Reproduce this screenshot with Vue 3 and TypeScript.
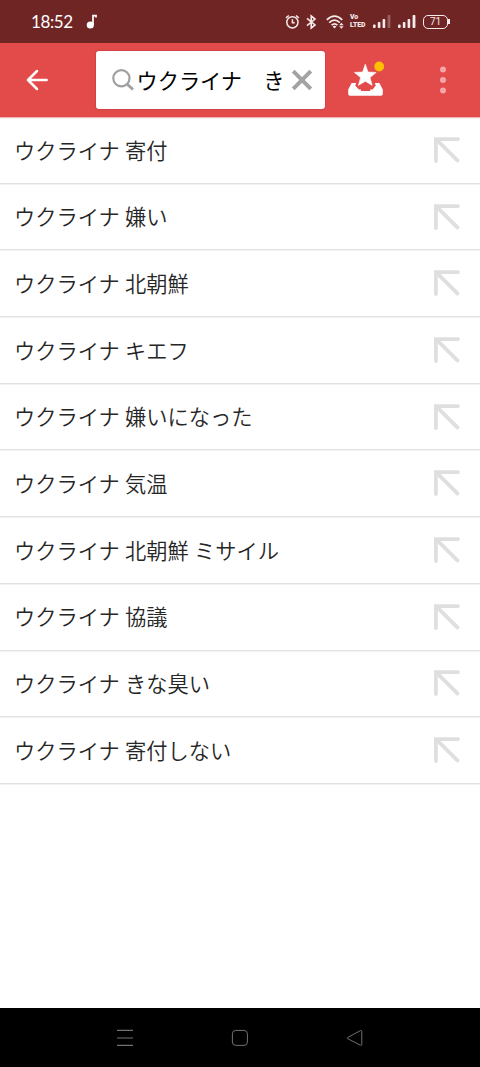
<script setup lang="ts">
const suggestions: string[] = [
  'ウクライナ 寄付',
  'ウクライナ 嫌い',
  'ウクライナ 北朝鮮',
  'ウクライナ キエフ',
  'ウクライナ 嫌いになった',
  'ウクライナ 気温',
  'ウクライナ 北朝鮮 ミサイル',
  'ウクライナ 協議',
  'ウクライナ きな臭い',
  'ウクライナ 寄付しない',
]
const query = 'ウクライナ　き'
</script>

<template>
  <div class="screen">
    <header class="status">
      <span class="clock">18:52</span>
      <svg class="note" width="12" height="16" viewBox="0 0 12 16">
        <circle cx="4.3" cy="11" r="3.6" fill="#fff" />
        <path d="M7 11V1.6H10V3.6" fill="none" stroke="#fff" stroke-width="1.7" />
      </svg>
      <div class="indicators">
        <svg class="alarm" width="15" height="16" viewBox="0 0 15 16" fill="none" stroke="#f5eaea" stroke-width="1.5">
          <circle cx="7.4" cy="8.3" r="5.6" />
          <path d="M7.4 5.3V8.8H9.7M1 3.8L3.8 1.5M11 1.5L13.8 3.8" />
        </svg>
        <svg class="bluetooth" width="11" height="16" viewBox="0 0 11 16" fill="none" stroke="#f5eaea" stroke-width="1.6">
          <path d="M1 4.4L9 11L5.2 14V2L9 5L1 11.6" />
        </svg>
        <svg class="wifi" width="19" height="16" viewBox="0 0 19 16" fill="none" stroke="#f5eaea" stroke-width="1.8">
          <path d="M.8 5.8Q8.5-1.6 16.2 5.8M3.2 8.6Q8.5 3.6 13.8 8.6M5.6 11.2Q8.5 8.5 11.4 11.2" />
          <path d="M6.6 12.4Q8.5 11.2 10.4 12.4L8.5 14.5Z" fill="#f5eaea" stroke="none" />
          <path d="M13.2 11.2L15.4 8.7L17.6 11.2ZM13.2 12.3H17.6L15.4 14.7Z" fill="#f5eaea" stroke="none" />
        </svg>
        <span class="volte"><b>Vo</b><b>LTED</b></span>
        <svg class="signal" width="18" height="14" viewBox="0 0 18 14" fill="#f5eaea">
          <rect x="0" y="9.5" width="2.6" height="3.5" rx=".8" />
          <rect x="4.8" y="7" width="2.6" height="6" rx=".8" />
          <rect x="9.6" y="4" width="2.6" height="9" rx=".8" />
          <rect x="14.6" y="0" width="2.8" height="13" rx=".8" opacity=".3" />
        </svg>
        <svg class="signal second" width="18" height="14" viewBox="0 0 18 14" fill="#f5eaea">
          <rect x="0" y="9.5" width="2.6" height="3.5" rx=".8" />
          <rect x="4.8" y="7" width="2.6" height="6" rx=".8" />
          <rect x="9.6" y="4" width="2.6" height="9" rx=".8" />
          <rect x="14.6" y="0" width="2.8" height="13" rx=".8" />
        </svg>
        <span class="battery">71</span><i class="cap"></i>
      </div>
    </header>

    <div class="toolbar">
      <svg class="back" width="24" height="22" viewBox="0 0 24 22" fill="none" stroke="#fff" stroke-width="2.5" stroke-linecap="round" stroke-linejoin="round">
        <path d="M22.7 11H4.2M13 2L4 11L13 20" />
      </svg>
      <div class="search">
        <svg class="lens" width="24" height="24" viewBox="0 0 24 24" fill="none" stroke="#a0a0a0">
          <circle cx="10.4" cy="10.2" r="8.1" stroke-width="2.2" />
          <path d="M16.2 16.2L22 21.6" stroke-width="2.8" />
        </svg>
        <span class="query">{{ query }}</span>
        <svg class="clear" width="22" height="22" viewBox="0 0 22 22" fill="none" stroke="#a3a3a3" stroke-width="4">
          <path d="M2.2 2.2L19.8 19.8M19.8 2.2L2.2 19.8" />
        </svg>
      </div>
      <svg class="favorites" width="38" height="38" viewBox="0 0 38 38">
        <path d="M3.6 22H8.2L7.2 24.5L10.8 28.6H13V30H22.2V28.6H24.6L27.8 24.5L26.8 22H31.4L34.8 28.4V33Q34.8 34.8 33 34.8H2Q.2 34.8 .2 33V28.4Z" fill="#fff" />
        <path d="M17.3 3.2L20 11.1L28.2 11.4L22 16.5L24.2 24.4L17.3 20.2L10.4 24.4L12.6 16.5L6.4 11.4L14.6 11.1Z" fill="#fff" stroke="#fff" stroke-width=".6" stroke-linejoin="round" />
        <circle cx="31.2" cy="5.5" r="4.9" fill="#ffbf00" />
      </svg>
      <svg class="more" width="8" height="28" viewBox="0 0 8 28" fill="#f3a6a6">
        <circle cx="4" cy="3.6" r="3" />
        <circle cx="4" cy="14" r="3" />
        <circle cx="4" cy="24.4" r="3" />
      </svg>
    </div>

    <ul class="list">
      <li v-for="item in suggestions" :key="item" class="row">
        <span>{{ item }}</span>
        <svg width="28" height="28" viewBox="0 0 28 28" fill="none" stroke="#dfdfdf">
          <path d="M25 3.1H2.9V25" stroke-width="3.8" stroke-linecap="round" />
          <path d="M3.5 3.7L25.6 25.6" stroke-width="3.8" />
        </svg>
      </li>
    </ul>

    <nav class="navbar">
      <svg width="18" height="18" viewBox="0 0 18 18" stroke="#707070" stroke-width="1.1">
        <path d="M1 1.4H17M1 9H17M1 16.4H17" />
      </svg>
      <svg width="18" height="18" viewBox="0 0 18 18" fill="none" stroke="#707070">
        <rect x="1.4" y="1.4" width="15" height="15" rx="3.4" />
      </svg>
      <svg width="18" height="18" viewBox="0 0 18 18" fill="none" stroke="#707070" stroke-linejoin="round">
        <path d="M14.3 1.7Q15.8 1 15.8 2.5V15.4Q15.8 16.8 14.4 16.1L1.6 9.7Q.8 9.1 1.6 8.5Z" />
      </svg>
    </nav>
  </div>
</template>

<style>
body {
  margin: 0;
}
</style>

<style scoped>
.screen {
  display: flex;
  flex-direction: column;
  width: 480px;
  height: 1067px;
  overflow: hidden;
  background: #fff;
  font-family: Roboto, "Noto Sans CJK JP", sans-serif;
}
svg {
  display: block;
  flex: none;
}
.status {
  display: flex;
  align-items: center;
  flex: none;
  box-sizing: border-box;
  height: 43px;
  padding: 0 30.5px 0 31px;
  background: #702525;
  color: #fff;
}
.clock {
  width: 55px;
  font: 17px/20px Lato, sans-serif;
  letter-spacing: -0.4px;
}
.indicators {
  display: flex;
  align-items: center;
  margin-left: auto;
}
.alarm {
  margin-right: 6px;
}
.bluetooth {
  margin-right: 9px;
}
.wifi {
  margin-right: 5px;
}
.volte {
  display: flex;
  flex-direction: column;
  width: 16px;
  margin-right: 7.5px;
  color: #f5eaea;
  font: 900 6.6px/7.4px Roboto, sans-serif;
  transform: scale(1.03, 1.15);
  transform-origin: left;
}
.volte b {
  height: 7.4px;
  font-weight: 900;
  white-space: nowrap;
}
.second {
  margin-left: 7px;
}
.battery {
  box-sizing: border-box;
  width: 25px;
  height: 14px;
  margin-left: 7px;
  border: 1.5px solid #f5eaea;
  border-radius: 5px;
  color: #f5eaea;
  font: 10px/12px Roboto, sans-serif;
  text-align: center;
}
.cap {
  width: 1.5px;
  height: 5px;
  background: #f5eaea;
}
.toolbar {
  display: flex;
  align-items: center;
  flex: none;
  box-sizing: border-box;
  height: 74px;
  padding: 0 33px 0 24px;
  background: #e34a4a;
  box-shadow: 0 1px 1px #f0b4b4;
}
.search {
  display: flex;
  align-items: center;
  box-sizing: border-box;
  width: 229px;
  height: 58px;
  margin-left: 48px;
  padding-left: 15px;
  border-radius: 3px;
  background: #fff;
  box-shadow: 0 0 1.5px #8f3030;
}
.query {
  width: 154px;
  margin-left: 1.5px;
  margin-right: 0.5px;
  padding-bottom: 1px;
  color: #000;
  font-size: 21.2px;
  font-family: "Noto Sans CJK JP", sans-serif;
  font-weight: 400;
  line-height: 30px;
  white-space: pre;
}
.favorites {
  margin-left: 23px;
}
.more {
  margin-left: auto;
}
.list {
  margin: 0;
  padding: 0;
  list-style: none;
}
.row {
  display: flex;
  align-items: center;
  justify-content: space-between;
  box-sizing: border-box;
  height: 66.7px;
  padding: 0 19px 0 14px;
  border-bottom: 1px solid #e2e2e2;
  box-shadow: 0 1px 0 #f3f3f3;
  color: #262626;
  font-size: 21.25px;
  font-weight: 350;
  line-height: 30px;
}
.row span {
  padding-top: 3.5px;
}
.navbar {
  display: flex;
  align-items: center;
  flex: none;
  box-sizing: border-box;
  height: 59px;
  margin-top: auto;
  padding: 0 116px;
  justify-content: space-between;
  background: #000;
}
</style>
